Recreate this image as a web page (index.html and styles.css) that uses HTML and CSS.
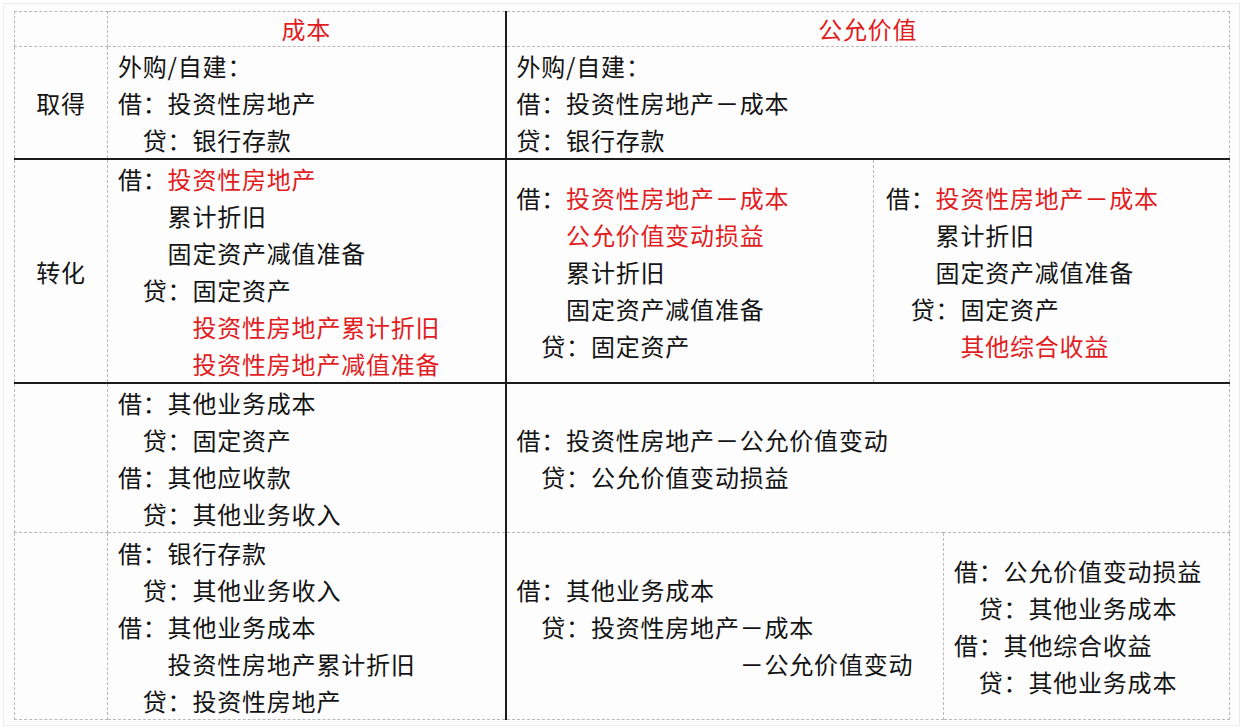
FILE: index.html
```html
<!DOCTYPE html>
<html lang="zh-CN">
<head>
<meta charset="utf-8">
<title>投资性房地产</title>
<link rel="stylesheet" href="styles.css">
</head>
<body>
<div class="frame">
<table class="ledger">
  <colgroup>
    <col class="c-label">
    <col class="c-cost">
    <col class="c-fa">
    <col class="c-fb">
    <col class="c-fc">
  </colgroup>
  <tr class="r-head">
    <td></td>
    <td class="head sep">成本</td>
    <td class="head" colspan="3">公允价值</td>
  </tr>
  <tr class="r1 thick">
    <td class="label">取得</td>
    <td class="sep">
      <div class="l">外购/自建：</div>
      <div class="l">借：投资性房地产</div>
      <div class="l i1">贷：银行存款</div>
    </td>
    <td colspan="3">
      <div class="l">外购/自建：</div>
      <div class="l">借：投资性房地产－成本</div>
      <div class="l">贷：银行存款</div>
    </td>
  </tr>
  <tr class="r2 thick">
    <td class="label">转化</td>
    <td class="sep">
      <div class="l">借：<span class="red">投资性房地产</span></div>
      <div class="l i2">累计折旧</div>
      <div class="l i2">固定资产减值准备</div>
      <div class="l i1">贷：固定资产</div>
      <div class="l i3 red">投资性房地产累计折旧</div>
      <div class="l i3 red">投资性房地产减值准备</div>
    </td>
    <td>
      <div class="l">借：<span class="red">投资性房地产－成本</span></div>
      <div class="l i2 red">公允价值变动损益</div>
      <div class="l i2">累计折旧</div>
      <div class="l i2">固定资产减值准备</div>
      <div class="l i1">贷：固定资产</div>
    </td>
    <td colspan="2" class="wide-pad">
      <div class="l">借：<span class="red">投资性房地产－成本</span></div>
      <div class="l i2">累计折旧</div>
      <div class="l i2">固定资产减值准备</div>
      <div class="l i1">贷：固定资产</div>
      <div class="l i3 red">其他综合收益</div>
    </td>
  </tr>
  <tr class="r3">
    <td class="label"></td>
    <td class="sep">
      <div class="l">借：其他业务成本</div>
      <div class="l i1">贷：固定资产</div>
      <div class="l">借：其他应收款</div>
      <div class="l i1">贷：其他业务收入</div>
    </td>
    <td colspan="3">
      <div class="l">借：投资性房地产－公允价值变动</div>
      <div class="l i1">贷：公允价值变动损益</div>
    </td>
  </tr>
  <tr class="r4">
    <td class="label"></td>
    <td class="sep">
      <div class="l">借：银行存款</div>
      <div class="l i1">贷：其他业务收入</div>
      <div class="l">借：其他业务成本</div>
      <div class="l i2">投资性房地产累计折旧</div>
      <div class="l i1">贷：投资性房地产</div>
    </td>
    <td colspan="2">
      <div class="l">借：其他业务成本</div>
      <div class="l i1">贷：投资性房地产－成本</div>
      <div class="l i9">－公允价值变动</div>
    </td>
    <td>
      <div class="l">借：公允价值变动损益</div>
      <div class="l i1">贷：其他业务成本</div>
      <div class="l">借：其他综合收益</div>
      <div class="l i1">贷：其他业务成本</div>
    </td>
  </tr>
</table>
</div>
</body>
</html>
```
FILE: styles.css
```css
:root {
  --c: 24.8px;
}
html, body {
  margin: 0;
  padding: 0;
  background: #ffffff;
}
body {
  font-family: "Noto Sans CJK SC", "Noto Sans", sans-serif;
  color: #141414;
}
.frame {
  margin: 3px;
  width: 1237px;
  height: 723px;
  border: 1px solid #ececec;
  padding: 7px 0 0 10px;
  box-sizing: border-box;
  background: #fdfdfe;
}
.ledger {
  border-collapse: collapse;
  table-layout: fixed;
  width: 1215px;
  font-size: 24px;
  letter-spacing: 0.8px;
}
.c-label { width: 93px; }
.c-cost { width: 398px; }
.c-fa { width: 368px; }
.c-fb { width: 70px; }
.c-fc { width: 286px; }
.ledger td {
  border: 1px dashed #b9b9b9;
  padding: 0 0 0 10px;
  vertical-align: middle;
  white-space: nowrap;
}
.ledger td.sep {
  border-right: 2px solid #1c1c1c;
}
.ledger tr.thick td {
  border-bottom: 2px solid #1c1c1c;
}
.r-head td { height: 34px; }
.r1 td { height: 110px; }
.r2 td { height: 222px; }
.r3 td { height: 147px; }
.r4 td { height: 186px; }
.ledger td.head {
  color: #e21d1f;
  text-align: center;
  padding: 0;
  line-height: 34px;
}
.ledger td.label {
  text-align: center;
  padding: 0;
}
.ledger td.wide-pad {
  padding-left: 12px;
}
.l {
  line-height: 37px;
  height: 37px;
}
.red { color: #e21d1f; }
.i1 { padding-left: var(--c); }
.i2 { padding-left: calc(var(--c) * 2); }
.i3 { padding-left: calc(var(--c) * 3); }
.i9 { padding-left: calc(var(--c) * 9); }
```
